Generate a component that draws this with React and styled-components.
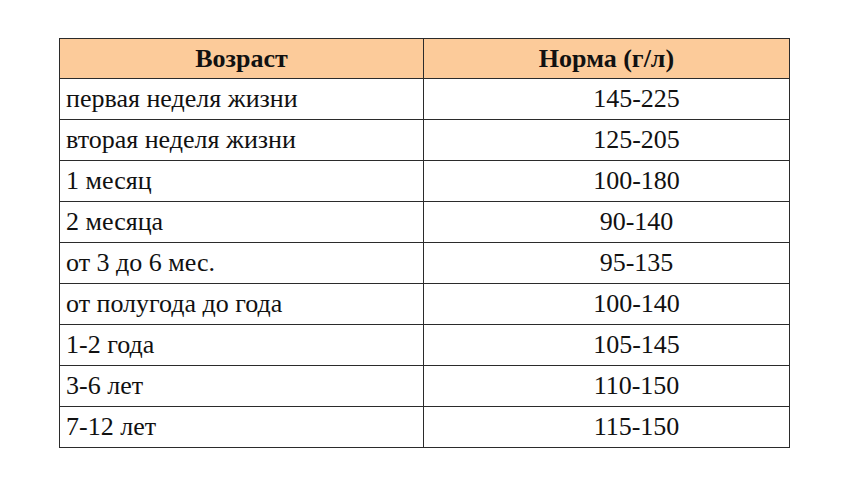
import styled, { createGlobalStyle } from 'styled-components'

const GlobalStyle = createGlobalStyle`
  html, body {
    margin: 0;
    padding: 0;
    background: #fff;
  }
`

const Page = styled.div`
  width: 845px;
  height: 492px;
  padding: 38px 0 0 59px;
  box-sizing: border-box;
`

const Table = styled.table`
  width: 730px;
  border-collapse: collapse;
  table-layout: fixed;
  color: #111;
`

const Col = styled.col`
  width: ${(p) => p.$w}px;
`

const Th = styled.th`
  height: 39px;
  padding: 0;
  border: 1px solid #2b2b2b;
  background: #fccb9a;
  text-align: center;
  font: bold 26px 'Liberation Serif', serif;
`

const Td = styled.td`
  height: 40px;
  padding: 0 0 0 ${(p) => (p.$num ? 60 : 6)}px;
  border: 1px solid #2b2b2b;
  white-space: nowrap;
  text-align: ${(p) => (p.$num ? 'center' : 'left')};
  font: 26px 'Liberation Serif', serif;
`

const Text = styled.span`
  font-family: 'Liberation Serif', serif;
`

const rows = [
  ['первая неделя жизни', '145-225'],
  ['вторая неделя жизни', '125-205'],
  ['1 месяц', '100-180'],
  ['2 месяца', '90-140'],
  ['от 3 до 6 мес.', '95-135'],
  ['от полугода до года', '100-140'],
  ['1-2 года', '105-145'],
  ['3-6 лет', '110-150'],
  ['7-12 лет', '115-150'],
]

const App = () => (
  <>
    <GlobalStyle />
    <Page>
      <Table>
        <colgroup>
          <Col $w={364} />
          <Col $w={366} />
        </colgroup>
        <thead>
          <tr>
            <Th><Text>Возраст</Text></Th>
            <Th><Text>Норма (г/л)</Text></Th>
          </tr>
        </thead>
        <tbody>
          {rows.map(([age, norm]) => (
            <tr key={age}>
              <Td><Text>{age}</Text></Td>
              <Td $num><Text>{norm}</Text></Td>
            </tr>
          ))}
        </tbody>
      </Table>
    </Page>
  </>
)

export default App
